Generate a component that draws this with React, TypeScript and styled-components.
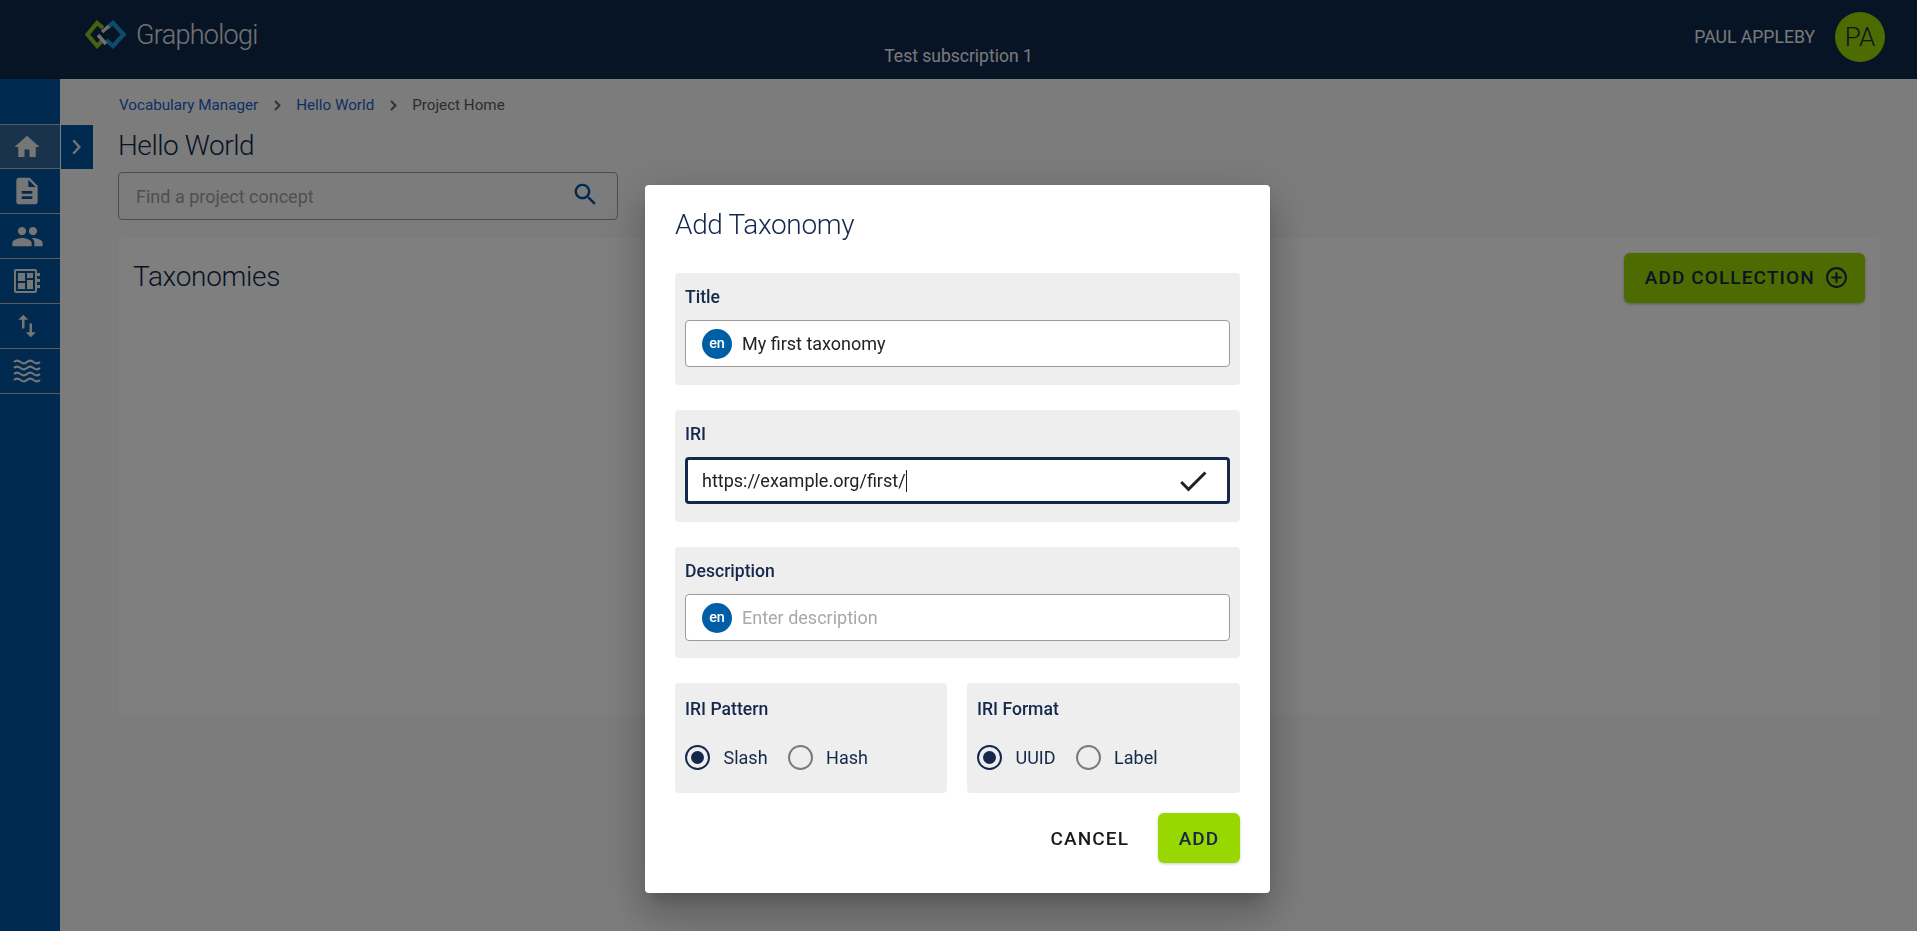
import React from "react";
import styled, { createGlobalStyle } from "styled-components";

const Global = createGlobalStyle`
  html, body { margin: 0; padding: 0; height: 100%; overflow: hidden; }
  body { font-family: Roboto, "Liberation Sans", sans-serif; background: #f8f8f8; color: #14284b; }
  * { box-sizing: border-box; }
`;

const TITLE = `Roboto, "Liberation Sans", sans-serif`;

const Page = styled.div`
  width: 1917px;
  height: 931px;
  display: flex;
  flex-direction: column;
`;
const Header = styled.header`
  height: 79px;
  flex: none;
  background: #0f294d;
  display: grid;
  grid-template-columns: 1fr auto 1fr;
  padding: 0 32px;
`;
const Brand = styled.div`
  display: flex;
  align-items: center;
  gap: 10px;
  height: 70px;
  padding-left: 53px;
`;
const BrandName = styled.span`
  font-family: ${TITLE};
  font-weight: 300;
  font-size: 27px;
  letter-spacing: -0.7px;
  color: #e4e4e4;
`;
const Subscription = styled.div`
  align-self: end;
  padding-bottom: 13px;
  font-size: 17.5px;
  line-height: 19px;
  color: #f2f2f2;
`;
const UserArea = styled.div`
  justify-self: end;
  display: flex;
  align-items: center;
  gap: 20px;
  height: 74px;
`;
const UserName = styled.span`
  font-size: 17.6px;
  color: #f0f0f0;
`;
const Avatar = styled.div`
  width: 50px;
  height: 50px;
  border-radius: 50%;
  background: #99d700;
  color: #14284b;
  font-size: 26px;
  font-weight: 300;
  display: flex;
  align-items: center;
  justify-content: center;
`;
const Body = styled.div`
  flex: 1;
  display: flex;
  min-height: 0;
`;
const Side = styled.nav`
  width: 60px;
  flex: none;
  background: #00549f;
  padding-top: 46px;
`;
const SideItem = styled.div<{ $active?: boolean }>`
  height: 45px;
  display: flex;
  align-items: center;
  justify-content: center;
  padding-right: 6px;
  border-bottom: 1px solid #b9b9b9;
  border-top: ${(p) => (p.$active ? "1px solid #b9b9b9" : "0")};
  background: ${(p) => (p.$active ? "#33669a" : "transparent")};
  margin-top: ${(p) => (p.$active ? "-1px" : "0")};
  svg { fill: #ececec; display: block; }
`;
const Flyout = styled.div`
  flex: none;
  width: 32px;
  height: 44px;
  margin: 46px 0 0 1px;
  background: #00549f;
  display: flex;
  align-items: center;
  justify-content: center;
  svg { stroke: #e6e6e6; stroke-width: 2.4; fill: none; display: block; margin-right: 2px; }
`;
const Main = styled.main`
  flex: 1;
  min-width: 0;
  margin-left: 26px;
  padding: 0 37px 0 0;
`;
const Crumbs = styled.div`
  display: flex;
  align-items: center;
  height: 16px;
  margin-top: 18px;
  font-size: 15.2px;
  color: #5b5b5b;
`;
const CrumbLink = styled.span`
  color: #1b5fc9;
`;
const CrumbSep = styled.span`
  display: inline-flex;
  margin: 0 15px 0 16px;
  svg { fill: none; stroke: #666; stroke-width: 2; display: block; }
`;
const PageTitle = styled.h1`
  margin: 16px 0 0 -1px;
  font-family: ${TITLE};
  font-weight: 300;
  font-size: 28px;
  letter-spacing: -0.45px;
  line-height: 34px;
  color: #14284b;
`;
const SearchBox = styled.div`
  margin: 9px 0 0 -1px;
  width: 500px;
  height: 48px;
  border: 1px solid #9b9b9b;
  border-radius: 4px;
  display: flex;
  align-items: center;
  justify-content: space-between;
  padding: 0 17px 0 17px;
  font-size: 18px;
  color: #9f9f9f;
  svg { fill: #00549f; display: block; margin-bottom: 3px; }
`;
const Card = styled.section`
  margin-top: 18px;
  height: 477px;
  background: #ffffff;
  border-radius: 4px;
  padding: 15px 15px 0 14px;
  display: flex;
  justify-content: space-between;
  align-items: flex-start;
`;
const CardTitle = styled.h2`
  margin: 1px 0 0;
  font-family: ${TITLE};
  font-weight: 300;
  font-size: 28px;
  letter-spacing: -0.3px;
  line-height: 46px;
  color: #14284b;
`;
const AddCollection = styled.div`
  width: 241px;
  height: 50px;
  background: #99d700;
  border-radius: 6px;
  box-shadow: 0 1px 3px rgba(0, 0, 0, 0.3);
  display: flex;
  align-items: center;
  justify-content: center;
  gap: 9.5px;
  padding: 0 0 1px 5px;
  font-size: 19px;
  font-weight: 500;
  letter-spacing: 1.1px;
  color: #14284b;
  svg { fill: #14284b; display: block; }
`;
const Overlay = styled.div`
  position: fixed;
  inset: 0;
  background: rgba(0, 0, 0, 0.5);
  display: flex;
  justify-content: center;
  align-items: flex-start;
  padding: 185px 2px 0 0;
`;
const Dialog = styled.div`
  width: 625px;
  height: 708px;
  background: #fff;
  border-radius: 4px;
  padding: 23px 30px 0;
  box-shadow: 0 11px 15px -7px rgba(0, 0, 0, 0.2), 0 24px 38px 3px rgba(0, 0, 0, 0.14), 0 9px 46px 8px rgba(0, 0, 0, 0.12);
  display: flex;
  flex-direction: column;
`;
const DialogTitle = styled.h2`
  margin: 0 0 31px;
  font-family: ${TITLE};
  font-weight: 300;
  font-size: 28px;
  letter-spacing: -0.35px;
  line-height: 34px;
  color: #14284b;
`;
const Field = styled.div<{ $h?: number }>`
  height: ${(p) => p.$h ?? 112}px;
  background: #eeeeee;
  border-radius: 4px;
  padding: 15px 10px 0;
  margin-bottom: 25px;
`;
const Label = styled.div`
  font-size: 17.6px;
  font-weight: 500;
  line-height: 19px;
  color: #14284b;
`;
const InputBox = styled.div<{ $focus?: boolean }>`
  margin-top: 13px;
  height: 47px;
  background: #fff;
  border: ${(p) => (p.$focus ? "3px solid #14284b" : "1px solid #9b9b9b")};
  border-radius: 4px;
  display: flex;
  align-items: center;
  padding-left: ${(p) => (p.$focus ? "14px" : "16px")};
  padding-right: 16px;
  font-size: 18px;
  color: #222;
  > svg { fill: #222; display: block; }
`;
const Lang = styled.span`
  width: 30px;
  height: 30px;
  border-radius: 50%;
  background: #005ea6;
  color: #fff;
  font-size: 14.4px;
  font-weight: 500;
  display: flex;
  align-items: center;
  justify-content: center;
  margin-right: 10px;
`;
const Placeholder = styled.span`
  color: #a8a8a8;
`;
const Caret = styled.span`
  display: inline-block;
  width: 1px;
  height: 22px;
  background: #222;
`;
const Value = styled.span`
  flex: 1;
  display: flex;
  align-items: center;
`;
const TwoCols = styled.div`
  display: grid;
  grid-template-columns: 272px 273px;
  gap: 20px;
`;
const RadioField = styled.div`
  height: 110px;
  background: #eeeeee;
  border-radius: 4px;
  padding: 17px 10px 0;
`;
const RadioRow = styled.div`
  display: flex;
  align-items: center;
  margin-top: 25px;
  height: 26px;
`;
const RadioDot = styled.span<{ $on?: boolean }>`
  width: 25px;
  height: 25px;
  border-radius: 50%;
  border: 2.5px solid ${(p) => (p.$on ? "#14284b" : "#7a7a7a")};
  display: flex;
  align-items: center;
  justify-content: center;
  margin-right: 13.5px;
  flex: none;
  &::after {
    content: "";
    width: 13px;
    height: 13px;
    border-radius: 50%;
    background: ${(p) => (p.$on ? "#14284b" : "transparent")};
  }
`;
const RadioText = styled.span`
  font-size: 18px;
  font-weight: 400;
  color: #14284b;
  margin-right: 20px;
`;
const Actions = styled.div`
  margin-top: 20px;
  display: flex;
  justify-content: flex-end;
  align-items: center;
  gap: 29px;
`;
const Cancel = styled.span`
  font-size: 19px;
  font-weight: 500;
  letter-spacing: 1.1px;
  color: #1a1a1a;
`;
const AddBtn = styled.div`
  width: 82px;
  height: 50px;
  border-radius: 6px;
  background: #99d700;
  box-shadow: 0 1px 3px rgba(0, 0, 0, 0.2);
  display: flex;
  align-items: center;
  justify-content: center;
  font-size: 19px;
  font-weight: 500;
  letter-spacing: 1.1px;
  color: #14284b;
`;

const Icon = ({ d, s = 24 }: { d: string; s?: number }) => (
  <svg width={s} height={s} viewBox="0 0 24 24"><path d={d} /></svg>
);

const Logo = () => (
  <svg width="41" height="30" viewBox="0 0 41 30" fill="none" strokeWidth="4.2">
    <path d="M18 8 L12 3 L2.5 14.5 L12 26 L17 21" stroke="#8fc31f" />
    <path d="M22 8 L28 3 L38.5 14.5 L28 26 L21 20" stroke="#1a9ad6" />
    <path d="M24 6 L17 12" stroke="#d9d9d9" strokeWidth="3.5" />
    <path d="M13 15 L21 24" stroke="#e0e0e0" strokeWidth="3.5" />
  </svg>
);

const Waves = () => (
  <svg width="28" height="28" viewBox="0 0 28 28" fill="none" style={{ fill: "none" }}>
    {[5, 11, 17, 23].map((y) => (
      <path key={y} d={`M1 ${y} c2 -2 4 -2 6.5 0 s4.5 2 6.5 0 s4 -2 6.5 0 s4.5 2 6.5 0`} stroke="#ececec" strokeWidth="2.1" />
    ))}
  </svg>
);

const Notebook = () => (
  <svg width="28" height="28" viewBox="0 0 28 28">
    <path fillRule="evenodd" d="M3 2h19a2 2 0 0 1 2 2v20a2 2 0 0 1-2 2H3a2 2 0 0 1-2-2V4a2 2 0 0 1 2-2zm0 2v20h19V4H3z" />
    <path d="M5 6h7v8H5zM5 16h7v6H5zM14 6h6v5h-6zM14 13h6v9h-6zM24 6h3v3h-3zM24 12h3v3h-3zM24 18h3v3h-3z" />
  </svg>
);

const Chevron = () => (
  <svg width="7" height="11" viewBox="0 0 7 11"><path d="M1 1l4.5 4.5L1 10" /></svg>
);

const BigChevron = () => (
  <svg width="9" height="16" viewBox="0 0 9 16"><path d="M1.2 1.2L7.4 8l-6.2 6.8" /></svg>
);

export default function App() {
  return (
    <>
      <Global />
      <Page>
        <Header>
          <Brand>
            <Logo />
            <BrandName>Graphologi</BrandName>
          </Brand>
          <Subscription>Test subscription 1</Subscription>
          <UserArea>
            <UserName>PAUL APPLEBY</UserName>
            <Avatar>PA</Avatar>
          </UserArea>
        </Header>
        <Body>
          <Side>
            <SideItem $active><Icon s={30} d="M10 20v-6h4v6h5v-8h3L12 3 2 12h3v8z" /></SideItem>
            <SideItem><Icon s={32} d="M14 2H6c-1.1 0-1.99.9-1.99 2L4 20c0 1.1.89 2 1.99 2H18c1.1 0 2-.9 2-2V8l-6-6zm2 16H8v-2h8v2zm0-4H8v-2h8v2zm-3-5V3.5L18.5 9H13z" /></SideItem>
            <SideItem><Icon s={33} d="M16 11c1.66 0 2.99-1.34 2.99-3S17.66 5 16 5c-1.66 0-3 1.34-3 3s1.34 3 3 3zm-8 0c1.66 0 2.99-1.34 2.99-3S9.66 5 8 5C6.34 5 5 6.34 5 8s1.34 3 3 3zm0 2c-2.33 0-7 1.17-7 3.5V19h14v-2.5c0-2.33-4.67-3.5-7-3.5zm8 0c-.29 0-.62.02-.97.05 1.16.84 1.97 1.97 1.97 3.45V19h6v-2.5c0-2.33-4.67-3.5-7-3.5z" /></SideItem>
            <SideItem><Notebook /></SideItem>
            <SideItem><Icon s={30} d="M16 17.01V10h-2v7.01h-3L15 21l4-3.99h-3zM9 3L5 6.99h3V14h2V6.99h3L9 3z" /></SideItem>
            <SideItem><Waves /></SideItem>
          </Side>
          <Flyout><BigChevron /></Flyout>
          <Main>
            <Crumbs>
              <CrumbLink>Vocabulary Manager</CrumbLink>
              <CrumbSep><Chevron /></CrumbSep>
              <CrumbLink>Hello World</CrumbLink>
              <CrumbSep><Chevron /></CrumbSep>
              <span>Project Home</span>
            </Crumbs>
            <PageTitle>Hello World</PageTitle>
            <SearchBox>
              Find a project concept
              <Icon s={29} d="M15.5 14h-.79l-.28-.27C15.41 12.59 16 11.11 16 9.5 16 5.91 13.09 3 9.5 3S3 5.91 3 9.5 5.91 16 9.5 16c1.61 0 3.09-.59 4.23-1.57l.27.28v.79l5 4.99L20.49 19l-4.99-5zm-6 0C7.01 14 5 11.99 5 9.5S7.01 5 9.5 5 14 7.01 14 9.5 11.99 14 9.5 14z" />
            </SearchBox>
            <Card>
              <CardTitle>Taxonomies</CardTitle>
              <AddCollection>
                ADD COLLECTION
                <Icon s={25} d="M13 7h-2v4H7v2h4v4h2v-4h4v-2h-4V7zm-1-5C6.48 2 2 6.48 2 12s4.48 10 10 10 10-4.48 10-10S17.52 2 12 2zm0 18c-4.41 0-8-3.59-8-8s3.59-8 8-8 8 3.59 8 8-3.59 8-8 8z" />
              </AddCollection>
            </Card>
          </Main>
        </Body>
      </Page>
      <Overlay>
        <Dialog>
          <DialogTitle>Add Taxonomy</DialogTitle>
          <Field>
            <Label>Title</Label>
            <InputBox><Lang>en</Lang>My first taxonomy</InputBox>
          </Field>
          <Field>
            <Label>IRI</Label>
            <InputBox $focus>
              <Value>https://example.org/first/<Caret /></Value>
              <Icon s={36} d="M9 16.17L4.83 12l-1.41 1.41L9 19 21 7l-1.41-1.41z" />
            </InputBox>
          </Field>
          <Field $h={111}>
            <Label>Description</Label>
            <InputBox><Lang>en</Lang><Placeholder>Enter description</Placeholder></InputBox>
          </Field>
          <TwoCols>
            <RadioField>
              <Label>IRI Pattern</Label>
              <RadioRow>
                <RadioDot $on /><RadioText>Slash</RadioText>
                <RadioDot /><RadioText>Hash</RadioText>
              </RadioRow>
            </RadioField>
            <RadioField>
              <Label>IRI Format</Label>
              <RadioRow>
                <RadioDot $on /><RadioText>UUID</RadioText>
                <RadioDot /><RadioText>Label</RadioText>
              </RadioRow>
            </RadioField>
          </TwoCols>
          <Actions>
            <Cancel>CANCEL</Cancel>
            <AddBtn>ADD</AddBtn>
          </Actions>
        </Dialog>
      </Overlay>
    </>
  );
}
